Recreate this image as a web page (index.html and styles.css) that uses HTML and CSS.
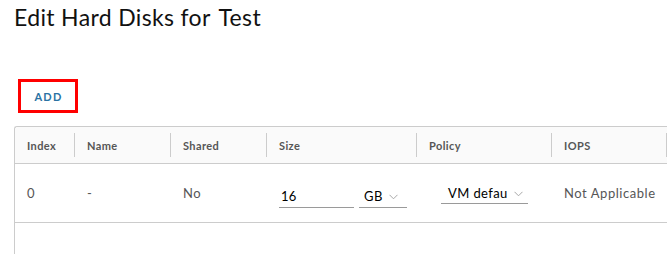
FILE: index.html
```html
<!DOCTYPE html>
<html>
<head>
<meta charset="utf-8">
<link rel="stylesheet" href="styles.css">
</head>
<body>
<div class="page">
  <h1 class="title">Edit Hard Disks for <span class="name">Test</span></h1>
  <div class="toolbar">
    <div class="highlight"><button class="btn-link">ADD</button></div>
  </div>
  <div class="grid">
    <div class="row head">
      <div class="hcell"><span>Index</span></div>
      <div class="hcell"><span>Name</span></div>
      <div class="hcell"><span>Shared</span></div>
      <div class="hcell"><span>Size</span></div>
      <div class="hcell"><span>Policy</span></div>
      <div class="hcell"><span>IOPS</span></div>
    </div>
    <div class="row body">
      <div class="cell">0</div>
      <div class="cell">-</div>
      <div class="cell">No</div>
      <div class="cell size">
        <div class="input">16</div>
        <div class="select unit">GB <svg class="chev" width="9" height="6" viewBox="0 0 9 6"><path d="M0.5 0.8 L4.5 4.8 L8.5 0.8" fill="none" stroke="#a8a8a8" stroke-width="1"/></svg></div>
      </div>
      <div class="cell policy">
        <div class="select pol">VM defau <svg class="chev" width="9" height="6" viewBox="0 0 9 6"><path d="M0.5 0.8 L4.5 4.8 L8.5 0.8" fill="none" stroke="#a8a8a8" stroke-width="1"/></svg></div>
      </div>
      <div class="cell muted">Not Applicable</div>
    </div>
  </div>
</div>
</body>
</html>
```
FILE: styles.css
```css
html, body {
  margin: 0;
  padding: 0;
  background: #ffffff;
  overflow: hidden;
}
body {
  font-family: "Lato", "Noto Sans", sans-serif;
  color: #333333;
  width: 667px;
  height: 254px;
}
.page {
  padding-left: 14px;
}
.title {
  margin: 0;
  padding-top: 3px;
  font-size: 23px;
  font-weight: 400;
  color: #111111;
  line-height: 28px;
  letter-spacing: 0.35px;
}
.title .name {
  margin-left: 2px;
}
.toolbar {
  margin-top: 48px;
  padding-left: 4px;
  height: 34px;
}
.highlight {
  display: inline-block;
  border: 3px solid #ff0000;
  width: 54px;
  height: 28px;
  box-sizing: content-box;
}
.btn-link {
  width: 54px;
  height: 28px;
  border: 0;
  background: transparent;
  padding: 0 0 0 1px;
  font-family: "Lato", sans-serif;
  font-size: 11px;
  font-weight: 700;
  letter-spacing: 1.2px;
  color: #2a72a3;
  cursor: pointer;
}
.grid {
  margin-top: 13px;
  border-top: 1px solid #cccccc;
  border-left: 1px solid #cccccc;
  border-radius: 3px 0 0 0;
  height: 127px;
  width: 652px;
  overflow: hidden;
}
.row {
  display: grid;
  grid-template-columns: 60px 96px 96px 150px 135px 115px;
}
.head {
  background: #fafafa;
  height: 36px;
  border-bottom: 1px solid #cccccc;
  border-radius: 3px 0 0 0;
}
.hcell {
  padding: 6px 0;
}
.hcell span {
  display: flex;
  align-items: center;
  height: 24px;
  padding-left: 12px;
  border-right: 1px solid #cccccc;
  font-size: 11px;
  font-weight: 700;
  color: #565656;
  letter-spacing: 0.4px;
}
.body {
  height: 58px;
  border-bottom: 1px solid #cccccc;
}
.cell {
  display: flex;
  align-items: center;
  padding-left: 12px;
  font-size: 13px;
  color: #565656;
  letter-spacing: 0.55px;
}
.size {
  gap: 5px;
  padding-top: 7px;
}
.input {
  width: 75px;
  height: 22px;
  border-bottom: 1px solid #9a9a9a;
  display: flex;
  align-items: center;
  padding-left: 2px;
  box-sizing: border-box;
  color: #000000;
  font-size: 13px;
  letter-spacing: 0.3px;
}
.select {
  height: 22px;
  border-bottom: 1px solid #9a9a9a;
  display: flex;
  align-items: center;
  box-sizing: border-box;
  color: #000000;
  font-size: 13px;
  letter-spacing: 0.4px;
}
.select .chev {
  margin-left: 6px;
  margin-top: 2px;
}
.unit {
  width: 48px;
  padding-left: 5px;
}
.policy {
  padding-left: 24px;
}
.pol {
  width: 87px;
  padding-left: 7px;
}
```
